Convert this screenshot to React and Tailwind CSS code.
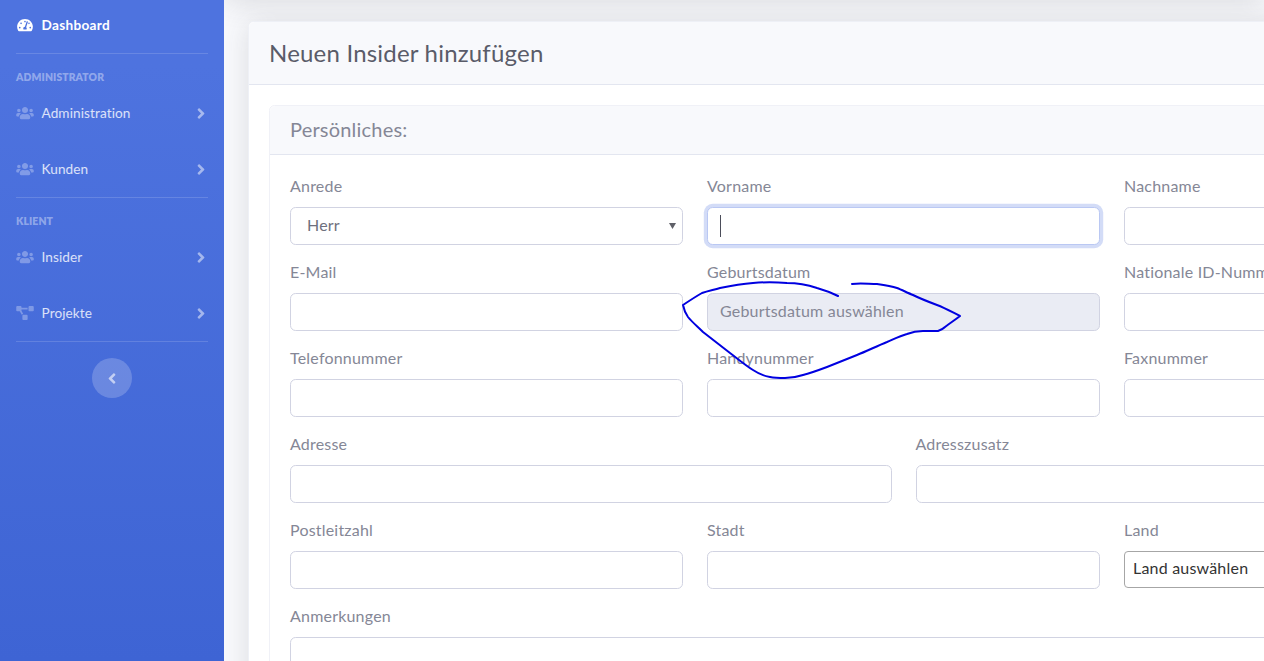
import React from 'react'
import { FaTachometerAlt, FaUsers, FaProjectDiagram, FaAngleRight, FaAngleLeft } from 'react-icons/fa'

const inputClass = 'block w-full h-[38px] px-3 border border-[#d1d3e2] rounded-[5.6px] text-[#6e707e] outline-none'

const NavItem = ({ icon: Icon, label }) => (
  <a className="flex items-center h-14 px-4 text-[13.6px] text-white/80">
    <Icon className="w-[18px] h-[14px] text-white/30 shrink-0" />
    <span className="ml-[7.5px] flex-1">{label}</span>
    <FaAngleRight className="w-[16px] h-[17px] mr-[-1px] text-white/50" />
  </a>
)

const SectionHeading = ({ children }) => (
  <div className="h-[31px] px-4 pt-[17px] text-[10.4px] leading-[13px] font-extrabold uppercase text-white/40">
    {children}
  </div>
)

const Divider = () => <hr className="mx-4 border-0 border-t border-white/15" />

const Field = ({ label, children }) => (
  <div className="mb-4">
    <label className="block mb-[10px] leading-[22px]">{label}</label>
    {children || <input type="text" className={inputClass + ' bg-white'} />}
  </div>
)

const Sidebar = () => (
  <aside className="w-56 shrink-0 h-full bg-gradient-to-b from-[#4e73df] from-10% to-[#3e64d4] font-['Lato','Noto_Sans',sans-serif] tracking-[0.1px]">
    <a className="flex items-center h-[50px] px-4 text-[13.6px] font-bold text-white tracking-[0.3px]">
      <FaTachometerAlt className="w-[18px] h-[14px] shrink-0" />
      <span className="ml-[7.5px]">Dashboard</span>
    </a>
    <div className="h-[3px]" />
    <Divider />
    <SectionHeading>Administrator</SectionHeading>
    <NavItem icon={FaUsers} label="Administration" />
    <NavItem icon={FaUsers} label="Kunden" />
    <Divider />
    <SectionHeading>Klient</SectionHeading>
    <NavItem icon={FaUsers} label="Insider" />
    <NavItem icon={FaProjectDiagram} label="Projekte" />
    <Divider />
    <button className="flex items-center justify-center w-10 h-10 mx-auto mt-4 rounded-full bg-white/20 text-white/60">
      <FaAngleLeft className="w-[16px] h-[17px]" />
    </button>
  </aside>
)

// blue pen mark someone drew over the screenshot
const Scribble = () => (
  <svg className="absolute left-0 top-0 pointer-events-none" width="1040" height="661" viewBox="224 0 1040 661" fill="none">
    <path
      d="M838 296 C830 292 824 290 817 288 C808 285 798 283 787 283 C775 282 764 282 753 283 C741 284 730 286 720 288 C713 290 708 291 702 293 C695 297 689 301 683 305 C684 310 685 313 688 317 C692 322 698 327 703 332 C712 339 721 346 730 353 C738 359 745 365 753 370 C759 374 764 376 770 377 C775 378 780 378 785 378 C791 378 797 377 803 375 C811 373 819 370 827 367 C837 363 847 359 857 355 C867 351 877 346 887 342 C894 339 900 336 907 334 C912 332 917 331 923 331 L938 331 C941 330 943 329 945 327 C950 323 955 320 960 316 C952 312 945 308 937 305 C929 302 921 299 913 295 C908 293 902 290 897 288 C891 286 884 285 877 284 C869 284 860 283 852 284"
      stroke="#0000e0"
      strokeWidth="2"
      strokeLinecap="round"
      strokeLinejoin="round"
    />
  </svg>
)

export default function App() {
  return (
    <div className="flex h-screen w-screen overflow-hidden bg-[#f8f9fc] font-['Lato','Noto_Sans',sans-serif] text-base tracking-[0.2px] text-[#858796]">
      <Sidebar />
      <main className="relative flex-1 min-w-0 overflow-hidden">
        {/* topbar is scrolled away, only its shadow shows */}
        <div className="h-[70px] -mt-[70px] shadow-[0_2.4px_28px_0_rgba(58,59,69,0.15)]" />
        <div className="ml-6 mt-[21px] w-[1311px] bg-white border border-[#eef0f6] rounded-[5.6px] shadow-[0_2.4px_28px_0_rgba(58,59,69,0.15)]">
          <div className="flex items-center h-[63px] px-5 bg-[#f8f9fc] border-b border-[#e3e6f0] rounded-t-[5.6px]">
            <h1 className="text-2xl text-[#5a5c69]">Neuen Insider hinzufügen</h1>
          </div>
          <div className="p-5">
            <div className="border border-[#f0f1f7] rounded-[5.6px]">
              <div className="flex items-center h-[49px] pb-[3px] px-5 bg-[#f8f9fc] border-b border-[#e3e6f0] rounded-t-[5.6px]">
                <h2 className="text-xl text-[#858796]">Persönliches:</h2>
              </div>
              <div className="p-5">
                <div className="grid grid-cols-3 gap-x-6">
                  <Field label="Anrede">
                    <div className="relative">
                      <select className={inputClass + ' appearance-none bg-white pl-4 pb-[3px]'} defaultValue="Herr">
                        <option>Herr</option>
                        <option>Frau</option>
                      </select>
                      <svg className="absolute right-[7px] top-4 pointer-events-none" width="7" height="6" viewBox="0 0 7 6">
                        <path d="M0 0h7L3.5 6z" fill="#5f6068" />
                      </svg>
                    </div>
                  </Field>
                  <Field label="Vorname">
                    <div className="flex items-center h-[38px] px-3 bg-white border border-[#bac8f3] rounded-[5.6px] shadow-[0_0_0_3.2px_rgba(78,115,223,0.25)]">
                      <span className="w-px h-[22px] bg-[#4b4d5a]" />
                    </div>
                  </Field>
                  <Field label="Nachname" />
                  <Field label="E-Mail" />
                  <Field label="Geburtsdatum">
                    <input
                      type="text"
                      disabled
                      placeholder="Geburtsdatum auswählen"
                      className={inputClass + ' bg-[#eaecf4] pb-[3px] placeholder:text-[#858796] placeholder:opacity-100'}
                    />
                  </Field>
                  <Field label="Nationale ID-Nummer" />
                  <Field label="Telefonnummer" />
                  <Field label="Handynummer" />
                  <Field label="Faxnummer" />
                </div>
                <div className="grid grid-cols-2 gap-x-6">
                  <Field label="Adresse" />
                  <Field label="Adresszusatz" />
                </div>
                <div className="grid grid-cols-3 gap-x-6">
                  <Field label="Postleitzahl" />
                  <Field label="Stadt" />
                  <Field label="Land">
                    <div className="flex items-center h-[37px] px-2 pb-[3px] bg-white border border-[#a6a6a6] rounded-[4px] text-[#333]">
                      Land auswählen
                    </div>
                  </Field>
                </div>
                <Field label="Anmerkungen">
                  <textarea rows={3} className="block w-full h-[86px] px-3 py-1.5 bg-white border border-[#d1d3e2] rounded-[5.6px] outline-none resize-none" />
                </Field>
              </div>
            </div>
          </div>
        </div>
        <Scribble />
      </main>
    </div>
  )
}
